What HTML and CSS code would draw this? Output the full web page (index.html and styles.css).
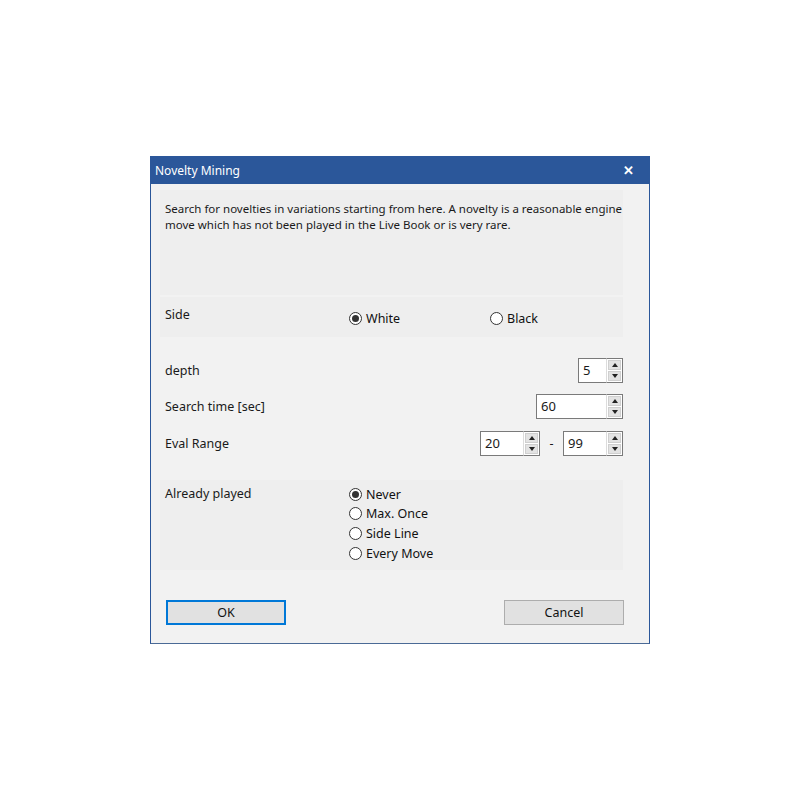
FILE: index.html
```html
<!DOCTYPE html>
<html lang="en">
<head>
  <meta charset="UTF-8" />
  <title>Novelty Mining</title>
  <link rel="stylesheet" href="styles.css">
</head>
<body>
  <div class="dialog">
    <div class="titlebar">
      <span class="title">Novelty Mining</span>
      <span class="close">✕</span>
    </div>

    <div class="content">
      <div class="panel desc">
        <p>Search for novelties in variations starting from here. A novelty is a reasonable engine move which has not been played in the Live Book or is very rare.</p>
      </div>

      <div class="panel side">
        <span class="label">Side</span>
        <label class="radio"><span class="dot checked"></span>White</label>
        <label class="radio"><span class="dot"></span>Black</label>
      </div>

      <div class="row depth">
        <span class="label">depth</span>
        <div class="spin">
          <span class="spin-input w-small">5</span>
          <span class="spin-btns"><span class="up"></span><span class="down"></span></span>
        </div>
      </div>

      <div class="row">
        <span class="label">Search time [sec]</span>
        <div class="spin">
          <span class="spin-input w-wide">60</span>
          <span class="spin-btns"><span class="up"></span><span class="down"></span></span>
        </div>
      </div>

      <div class="row">
        <span class="label">Eval Range</span>
        <div class="range">
          <div class="spin">
            <span class="spin-input w-mid">20</span>
            <span class="spin-btns"><span class="up"></span><span class="down"></span></span>
          </div>
          <span class="dash">-</span>
          <div class="spin">
            <span class="spin-input w-mid">99</span>
            <span class="spin-btns"><span class="up"></span><span class="down"></span></span>
          </div>
        </div>
      </div>

      <div class="panel played">
        <span class="label">Already played</span>
        <div class="options">
          <label class="radio"><span class="dot checked"></span>Never</label>
          <label class="radio"><span class="dot"></span>Max. Once</label>
          <label class="radio"><span class="dot"></span>Side Line</label>
          <label class="radio"><span class="dot"></span>Every Move</label>
        </div>
      </div>

      <div class="buttons">
        <button class="btn default">OK</button>
        <button class="btn">Cancel</button>
      </div>
    </div>
  </div>
</body>
</html>
```

FILE: styles.css
```css
body {
  margin: 0;
  background-color: #ffffff;
  font-family: "Noto Sans", "Open Sans", sans-serif;
  font-size: 12.5px;
  color: #1a1a1a;
}

.dialog {
  width: 498px;
  height: 487px;
  margin: 156px 0 0 150px;
  background-color: #f2f2f2;
  border: 1px solid #2b579a;
  border-top: none;
  border-bottom-color: #4a6a96;
}

.titlebar {
  height: 28px;
  margin: 0 -1px;
  background-color: #2b579a;
  color: #ffffff;
  display: flex;
  align-items: center;
  justify-content: space-between;
  padding: 0 16px 0 5px;
}

.title {
  font-size: 12px;
}

.close {
  font-size: 13px;
  font-weight: bold;
}

.content {
  padding: 6px 26px 0 9px;
}

.panel {
  background-color: #eeeeee;
}

.desc {
  height: 105px;
  box-sizing: border-box;
  padding: 11px 0 0 5px;
  font-size: 11.5px;
}

.desc p {
  margin: 0;
  line-height: 16px;
}

.side {
  margin-top: 2px;
  height: 40px;
  display: grid;
  grid-template-columns: 184px 141px 1fr;
  padding-left: 5px;
}

.side .label {
  padding-top: 9px;
}

.side .radio {
  padding-top: 13px;
  align-self: start;
  height: auto;
}

.radio {
  display: flex;
  align-items: center;
  gap: 4px;
  height: 19.6px;
  color: #111;
}

.dot {
  width: 11px;
  height: 11px;
  border: 1px solid #333333;
  border-radius: 50%;
  background-color: #ffffff;
  position: relative;
  flex-shrink: 0;
}

.dot.checked::after {
  content: "";
  position: absolute;
  left: 2px;
  top: 2px;
  width: 7px;
  height: 7px;
  border-radius: 50%;
  background-color: #333333;
}

.row {
  height: 36.5px;
  display: flex;
  align-items: center;
  justify-content: space-between;
  padding-left: 5px;
}

.depth {
  margin-top: 15px;
}

.spin {
  display: flex;
  height: 25px;
}

.spin-input {
  background-color: #ffffff;
  border: 1px solid #7a7a7a;
  border-right: none;
  padding-left: 4px;
  font-size: 13px;
  line-height: 23px;
  box-sizing: border-box;
}

.w-small { width: 28px; }
.w-wide { width: 70px; }
.w-mid { width: 43px; }

.spin-btns {
  width: 17px;
  display: flex;
  flex-direction: column;
  border: 1px solid #7a7a7a;
  border-left: 1px solid #dcdcdc;
  box-sizing: border-box;
  background-color: #ffffff;
  padding: 1px;
  gap: 1px;
}

.spin-btns span {
  flex: 1;
  background-color: #e3e3e3;
  border: 1px solid #cfcfcf;
  position: relative;
}

.spin-btns span::after {
  content: "";
  position: absolute;
  left: 50%;
  top: 50%;
  margin-left: -3px;
  border-left: 3px solid transparent;
  border-right: 3px solid transparent;
}

.spin-btns .up::after {
  margin-top: -2px;
  border-bottom: 4px solid #222;
}

.spin-btns .down::after {
  margin-top: -2px;
  border-top: 4px solid #222;
}

.range {
  display: flex;
  align-items: center;
}

.dash {
  width: 23px;
  text-align: center;
}

.played {
  margin-top: 18px;
  height: 90px;
  display: grid;
  grid-template-columns: 184px 1fr;
  padding-left: 5px;
}

.played .label {
  padding-top: 5px;
}

.options {
  padding-top: 5px;
}

.buttons {
  display: flex;
  justify-content: space-between;
  margin: 30px -1px 0 0;
  padding: 0 0 0 6px;
}

.btn {
  width: 120px;
  height: 25px;
  font-family: inherit;
  font-size: 12.5px;
  color: #111;
  background-color: #e1e1e1;
  border: 1px solid #adadad;
}

.btn.default {
  border: 2px solid #0078d7;
}
```
